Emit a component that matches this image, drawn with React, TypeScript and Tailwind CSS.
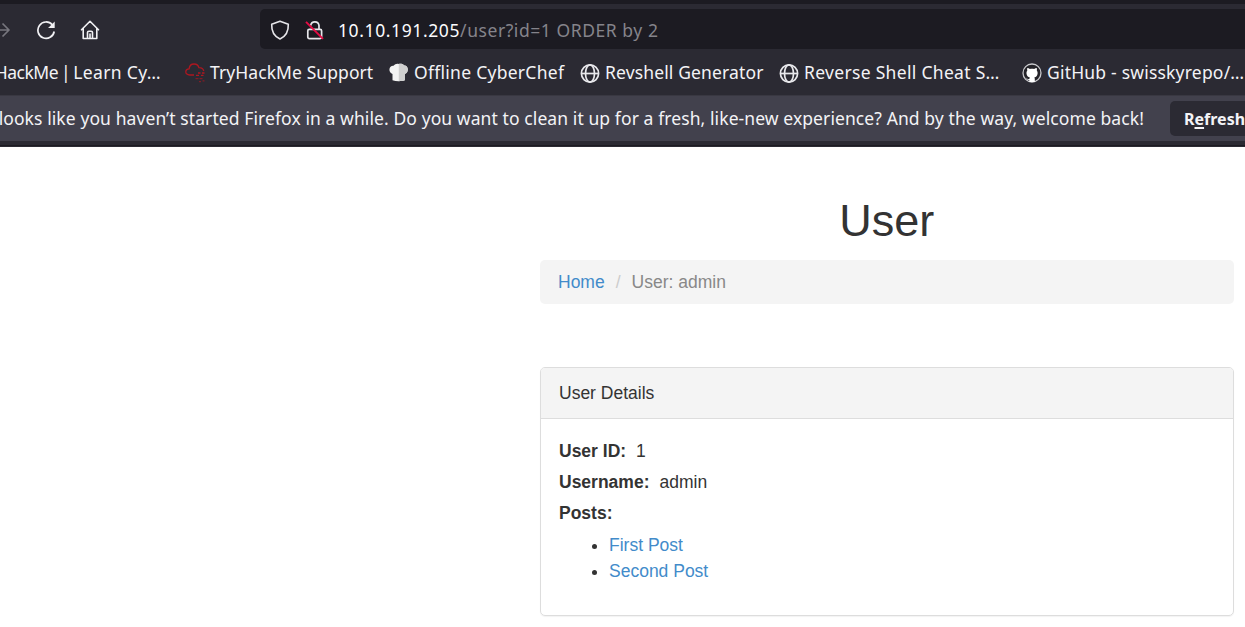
import React from "react";

function Globe() {
  return (
    <svg className="h-5 w-5" viewBox="0 0 20 20" fill="none" stroke="#e8e8ec" strokeWidth="1.7">
      <circle cx="10" cy="10.500" r="8.600" />
      <ellipse cx="10" cy="10.500" rx="4.500" ry="8.600" />
      <path d="M1.500 10.500h17" />
    </svg>
  );
}

function GitHub() {
  return (
    <svg className="h-5 w-5" viewBox="0 0 20 20">
      <circle cx="10" cy="10" r="9" fill="#242329" stroke="#c9c9cd" strokeWidth="1.300" />
      <path d="M5.300 4.900c.9 0 1.800.5 2.600 1 1.400-.3 2.800-.3 4.200 0 .8-.5 1.700-1 2.600-1 .3.900.3 1.700.1 2.500.7.900.9 1.900.8 3.100-.2 2.400-1.400 3.500-3.300 3.900.4.500.5 1 .5 1.700v2.900H7.300v-2c-1.500.2-2.100-.3-2.700-1.400l-.8-.9c1.200-.1 1.500 1.300 2.400 1.400.4.100.8 0 1.100-.1.100-.7.300-1.200.6-1.600-2-.4-3.200-1.500-3.400-3.900-.1-1.200.1-2.200.8-3.100-.3-.8-.3-1.600 0-2.500z" fill="#fff" />
    </svg>
  );
}

function Cloud() {
  return (
    <svg className="h-5 w-5" viewBox="0 0 20 20" fill="none" stroke="#ad1720" strokeWidth="1.3">
      <path d="M9 12H4.600C2.400 12 .8 10.600.8 8.900s1.500-3 3.300-3C4.400 3 6.400 1 9.100 1c2.500 0 4.200 1.500 4.800 3.700 2.500-.1 4.300 1 4.900 3.300" />
      <path d="M13 10h2.500M17 10h2.500M11 12.300h3M16 12.300h2.500" />
      <path d="M10.500 15.700h3M14.500 15.700h3M14 18.700h2M17.500 17.800h2" opacity=".65" />
    </svg>
  );
}

function ChefHat() {
  return (
    <svg className="h-5 w-5" viewBox="0 0 20 20">
      <path d="M3.500 17.300V11C1.600 10.200.3 8.600.4 6.400.5 3.900 2.400 2.500 4.500 2.700 5.800.9 8 .3 9.800.9c2-.6 4.200 0 5.600 1.600 2.200 0 3.400 1.800 3.400 4 0 2.200-1 3.700-3 4.500v6.300c-3.500 1.200-8.800 1.200-12.300 0z" fill="#f3f3f3" />
      <path d="M9.800.9c2-.6 4.200 0 5.600 1.600 2.200 0 3.400 1.800 3.400 4 0 2.200-1 3.700-3 4.500v6.300c-1.700.6-3.900.9-6 .9z" fill="#cfcfcf" />
    </svg>
  );
}

function Bookmark({ icon, label, width, tracking }: { icon: React.ReactNode; label: string; width: string; tracking: string }) {
  return (
    <div className={"flex shrink-0 items-center whitespace-nowrap " + width}>
      <span className="mr-[5px] h-5 w-5 shrink-0">{icon}</span>
      <span className={tracking}>{label}</span>
    </div>
  );
}

function Toolbar() {
  return (
    <div className="flex h-[46px] items-center pt-1">
      <svg className="mt-0.5 h-5 w-[10px] shrink-0" viewBox="0 0 10 20" fill="none" stroke="#77767e" strokeWidth="1.7">
        <path d="M0 10h9M2.500 3.500 9 10l-6.500 6.500" strokeLinejoin="round" />
      </svg>
      <svg className="mt-0.5 ml-[26px] h-5 w-5 shrink-0" viewBox="0 0 20 20" fill="none" stroke="#f1f1f4" strokeWidth="1.700">
        <path d="M16.300 4.800A8.200 8.200 0 1 0 18.200 11.500" />
        <path d="M18.700 1.500v6.600h-6.600z" fill="#f1f1f4" stroke="none" />
      </svg>
      <svg className="mt-0.5 ml-6 h-5 w-5 shrink-0" viewBox="0 0 20 20" fill="none" stroke="#f1f1f4" strokeWidth="1.600" strokeLinejoin="round" strokeLinecap="round">
        <path d="M1.500 9.800 10 1.300l8.500 8.500M3.200 8.500v10h13.600v-10M7.500 18.300v-5.700c0-.9.500-1.400 1.300-1.400h2.400c.8 0 1.300.5 1.300 1.400v5.700M10 14v4.300" />
      </svg>
      <div className="ml-40 flex h-10 flex-1 items-center rounded-l-[5px] bg-[#1c1b22]">
        <svg className="mt-px ml-[10px] h-5 w-5 shrink-0" viewBox="0 0 20 20" fill="none" stroke="#e6e6ea" strokeWidth="1.600" strokeLinejoin="round">
          <path d="M10 1.200 18.300 4.200c.3 6.700-2.200 11.900-8.300 14.800C3.900 16.100 1.400 10.900 1.700 4.200z" />
        </svg>
        <svg className="mt-px ml-[15px] h-5 w-5 shrink-0" viewBox="0 0 20 20" fill="none" stroke="#e6e6ea" strokeWidth="1.700">
          <path d="M5.700 5.500a4.200 4.200 0 0 1 8.300 0v4" />
          <rect x="2.800" y="9.300" width="13.800" height="9.300" rx="1.500" />
          <path d="M1 1.800 18 18.800" stroke="#e60d45" strokeWidth="1.900" />
        </svg>
        <span className="mt-[3px] ml-[13px] text-[17.5px] tracking-[0.61px] whitespace-pre text-[#fbfbfe]">
          10.10.191.205<span className="tracking-[0.56px] text-[#85848b]">/user?id=1 ORDER by 2</span>
        </span>
      </div>
    </div>
  );
}

export default function App() {
  return (
    <div className="h-[627px] w-[1245px] overflow-hidden bg-white font-['Liberation_Sans',sans-serif] text-[17.5px] text-[#333]">
      <header className="h-[147px] bg-[#2b2a33] font-['Noto_Sans',sans-serif] text-[17.5px] text-[#f3f3f6]">
        <div className="h-1 bg-[#1c1b22]" />
        <Toolbar />
        <nav className="flex h-[45px] items-center overflow-hidden">
          <div className="flex w-[161px] shrink-0 justify-end whitespace-pre">
            <span className="tracking-[-0.5px] [word-spacing:-1px]">TryHackMe | </span>
            <span className="tracking-[0.35px]">Learn Cy…</span>
          </div>
          <div className="ml-6 flex">
            <Bookmark icon={<Cloud />} label="TryHackMe Support" width="w-[204px]" tracking="tracking-[0.08px]" />
            <Bookmark icon={<ChefHat />} label="Offline CyberChef" width="w-[191px]" tracking="tracking-[0.27px]" />
            <Bookmark icon={<Globe />} label="Revshell Generator" width="w-[199px]" tracking="tracking-[0.14px]" />
            <Bookmark icon={<Globe />} label="Reverse Shell Cheat S…" width="w-[243px]" tracking="tracking-[0.31px]" />
            <Bookmark icon={<GitHub />} label="GitHub - swisskyrepo/…" width="w-[222px]" tracking="tracking-[0.2px]" />
          </div>
        </nav>
        <div className="flex h-[46px] items-center overflow-hidden border-t border-[#393842] bg-[#42414d] whitespace-nowrap">
          <div className="flex w-[1144px] shrink-0 justify-end tracking-[0.09px]">It looks like you haven’t started Firefox in a while. Do you want to clean it up for a fresh, like-new experience? And by the way, welcome back!</div>
          <button className="ml-[26px] h-[35px] w-[200px] shrink-0 rounded-[5px] bg-[#2b2a33] pl-[14px] text-left text-[16px] font-bold">
            R<span className="underline decoration-2 underline-offset-2">e</span>fresh Firefox…
          </button>
        </div>
        <div className="h-[4px]" />
        <div className="h-px bg-[#1c1b22]" />
      </header>
      <main className="ml-[540px] w-[693.5px]">
        <h1 className="pt-[49px] text-center text-[45px] leading-[50px]">User</h1>
        <div className="mt-[13.5px] flex h-[44.5px] items-center rounded-[5px] bg-[#f4f4f4] pl-[18px]">
          <a className="text-[#428bca]">Home</a>
          <span className="mx-[11px] text-[#ccc]">/</span>
          <span className="text-[#888]">User: admin</span>
        </div>
        <section className="mt-[63px] h-[249px] rounded-[5px] border border-[#ddd] shadow-[0_1px_1px_rgba(0,0,0,0.05)]">
          <div className="flex h-[51px] items-center rounded-t-[4px] border-b border-[#ddd] bg-[#f4f4f4] pl-[18px]">User Details</div>
          <div className="pt-[19px] pl-[18px] leading-[26px]">
            <p className="mb-[5px]"><b className="mr-[10px]">User ID:</b>1</p>
            <p className="mb-[5px]"><b className="mr-[10px]">Username:</b>admin</p>
            <p className="mb-[6px]"><b>Posts:</b></p>
            <ul className="list-disc pl-[50px]">
              <li><a className="text-[#428bca]">First Post</a></li>
              <li><a className="text-[#428bca]">Second Post</a></li>
            </ul>
          </div>
        </section>
      </main>
    </div>
  );
}
